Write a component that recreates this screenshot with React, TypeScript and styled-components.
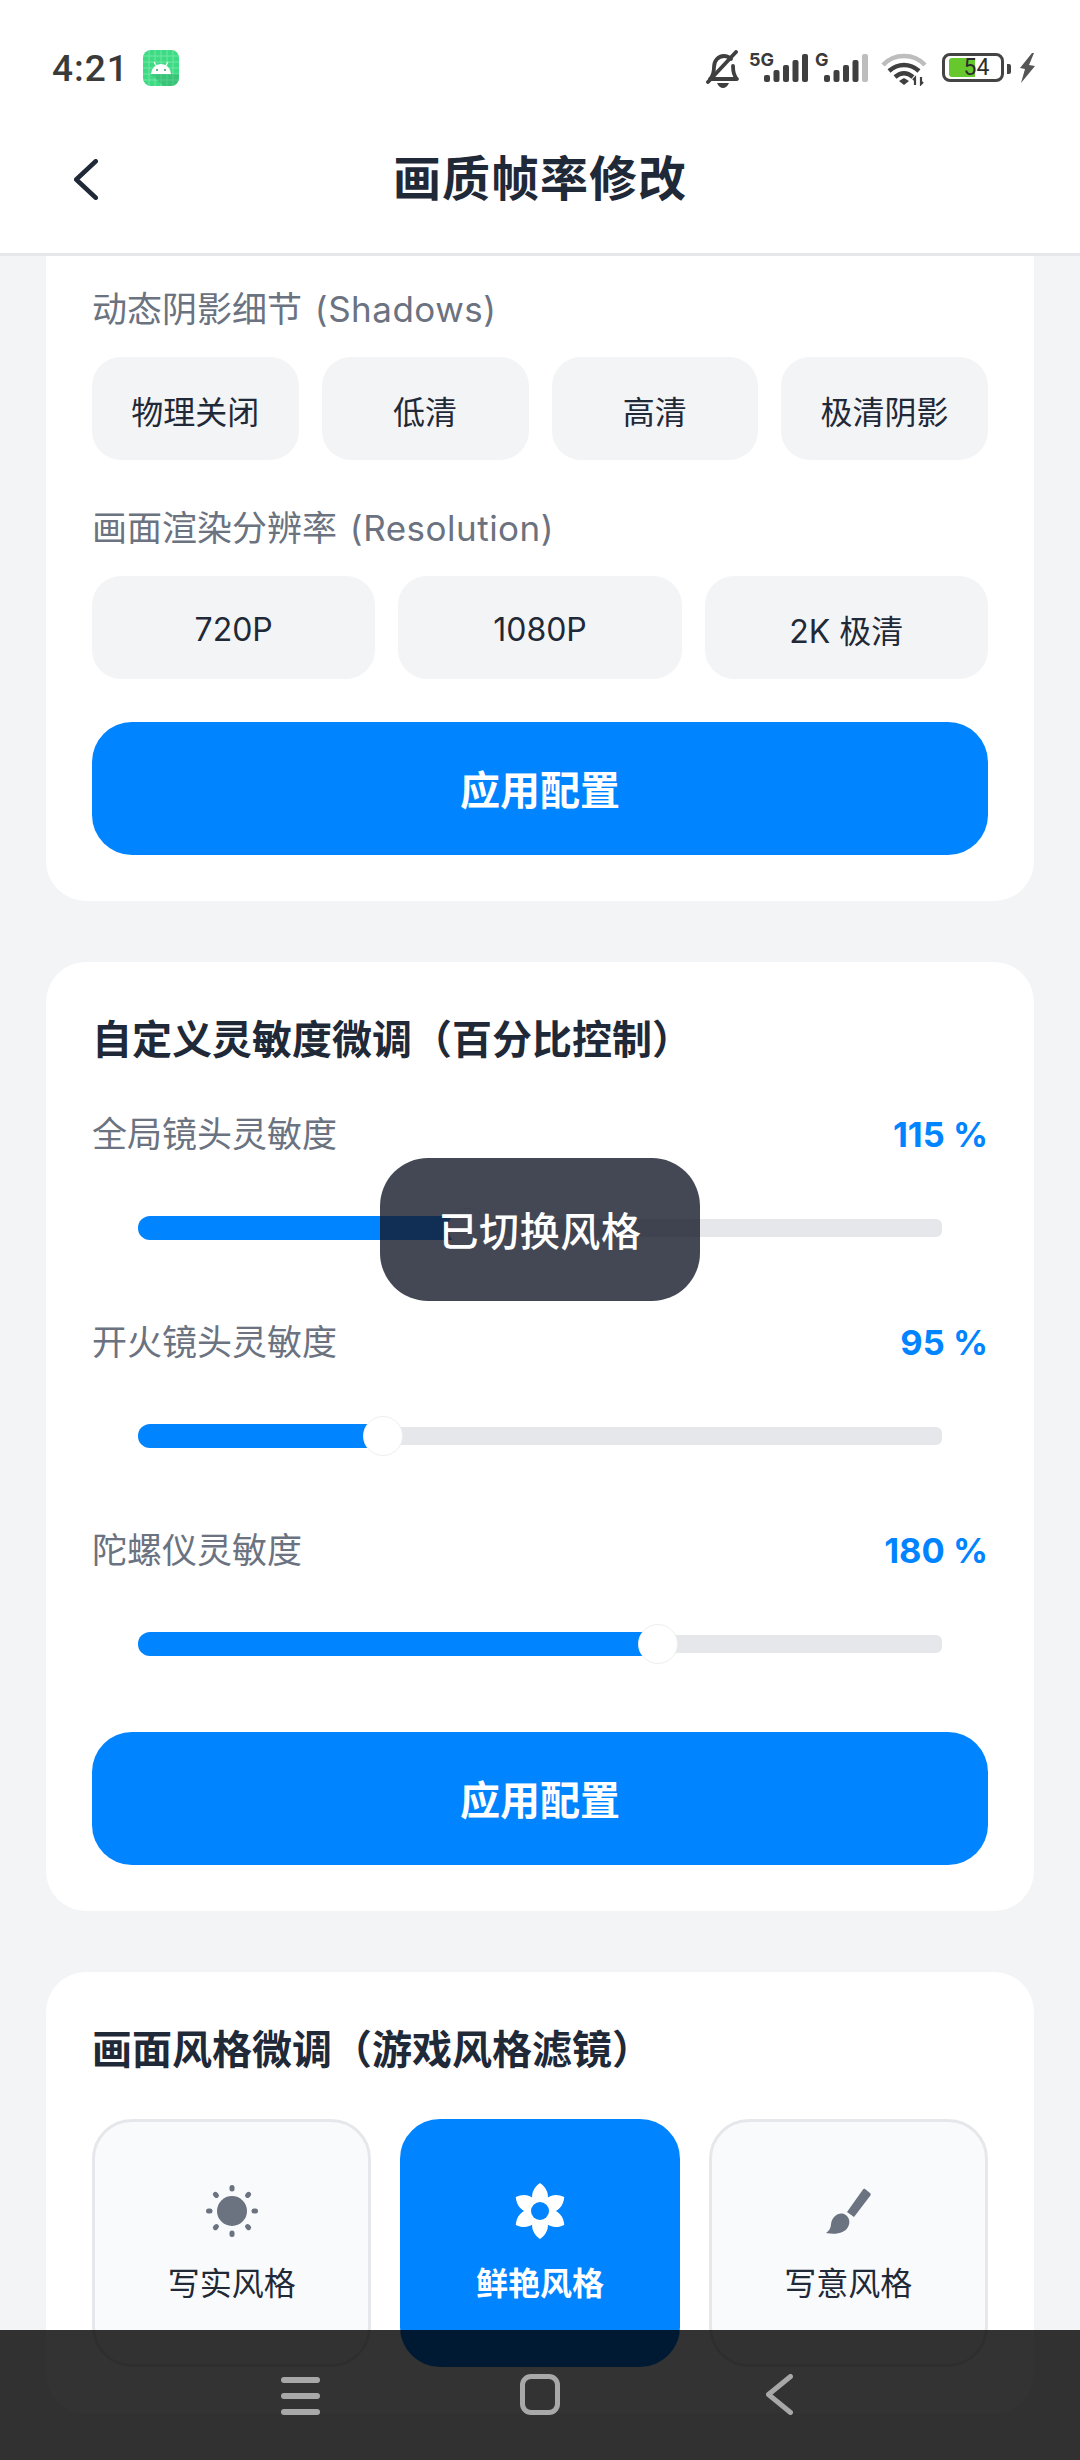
import React from "react";
import styled, { createGlobalStyle } from "styled-components";

const GlobalStyle = createGlobalStyle`
  html, body {
    margin: 0;
    padding: 0;
    background: #f3f4f6;
  }
  * {
    box-sizing: border-box;
  }
`;

const Page = styled.div`
  position: relative;
  width: 1080px;
  height: 2460px;
  overflow: hidden;
  background: #f3f4f6;
  font-family: "Inter", "Noto Sans CJK SC", sans-serif;
  color: #1f2937;
`;

const TopArea = styled.header`
  background: #fff;
  border-bottom: 3px solid #e5e7eb;
`;

const StatusBar = styled.div`
  height: 103px;
  padding: 50px 44px 0 52px;
  display: flex;
  justify-content: space-between;
  align-items: flex-start;
`;

const StatusLeft = styled.div`
  display: flex;
  align-items: center;
  gap: 14px;
  height: 36px;
`;

const Time = styled.span`
  font-family: "Roboto", sans-serif;
  font-size: 37px;
  font-weight: 500;
  letter-spacing: 1px;
  color: #3a3a3a;
`;

const StatusRight = styled.div`
  display: flex;
  align-items: flex-start;
`;

const NetworkBadge = styled.span`
  position: absolute;
  top: 2px;
  left: ${(p) => p.$left}px;
  font-size: 18px;
  line-height: 16px;
  font-weight: 700;
  color: #3a3a3a;
`;

const SignalBox = styled.div`
  position: relative;
  width: ${(p) => p.$width}px;
  height: 36px;
  margin-left: ${(p) => p.$gap}px;
`;

const SignalSlot = styled.div`
  position: absolute;
  left: ${(p) => p.$left}px;
  bottom: 4px;
  width: 45px;
  height: 28px;
`;

const Battery = styled.div`
  position: relative;
  width: 62px;
  height: 29px;
  margin: 3px 0 0 15px;
  border: 3px solid #444;
  border-radius: 8px;
  display: flex;
  align-items: center;
  justify-content: center;
  font-family: "Roboto", sans-serif;
  font-size: 23px;
  color: #2d2d2d;
`;

const BatteryFill = styled.div`
  position: absolute;
  left: 4px;
  top: 2px;
  bottom: 2px;
  width: 26px;
  background: #67c82e;
  border-radius: 3px 0 0 3px;
`;

const BatteryText = styled.span`
  position: relative;
  margin-left: 7px;
`;

const BatteryNub = styled.div`
  width: 4px;
  height: 10px;
  margin: 14px 0 0 3px;
  background: #444;
  border-radius: 0 2px 2px 0;
`;

const WifiSvg = styled.svg`
  margin: 2px 0 0 13px;
`;

const BoltSvg = styled.svg`
  margin: 3px 0 0 8px;
`;

const NavHeader = styled.div`
  height: 150px;
  padding: 2px 0 0 74px;
  display: grid;
  grid-template-columns: 1fr auto 1fr;
  align-items: center;
`;

const BackButton = styled.div`
  display: flex;
  align-items: center;
`;

const Title = styled.h1`
  margin: 0 0 0 -74px;
  font-size: 48px;
  line-height: 64px;
  font-weight: 700;
  color: #1f2937;
  letter-spacing: 1px;
`;

const Content = styled.main`
  padding: 0 46px;
  display: flex;
  flex-direction: column;
  gap: 61px;
`;

const Card = styled.section`
  background: #fff;
  border-radius: 40px;
  padding: 48px 46px 46px;
`;

const ScrolledCard = styled(Card)`
  border-radius: 0 0 40px 40px;
  padding-top: 28px;
`;

const CardTitle = styled.h2`
  margin: 0 0 41px;
  padding-top: 2px;
  font-size: 40px;
  line-height: 56px;
  font-weight: 700;
  color: #1f2937;
`;

const Label = styled.div`
  font-size: 35px;
  line-height: 50px;
  word-spacing: 3px;
  color: #6b7280;
`;

const LatinPart = styled.span`
  letter-spacing: 0.5px;
`;

const ChipRow = styled.div`
  display: grid;
  grid-template-columns: repeat(${(p) => p.$cols}, 1fr);
  gap: 23px;
  margin: 23px 0 43px;
`;

const Chip = styled.div`
  height: 103px;
  padding-top: 3px;
  border-radius: 29px;
  background: #f3f4f6;
  display: flex;
  align-items: center;
  justify-content: center;
  font-size: 32px;
  color: #1f2937;
`;

const ApplyButton = styled.div`
  height: 133px;
  padding-bottom: 1px;
  border-radius: 40px;
  background: #0084ff;
  display: flex;
  align-items: center;
  justify-content: center;
  font-size: 40px;
  font-weight: 700;
  color: #fff;
`;

const SliderList = styled.div`
  display: flex;
  flex-direction: column;
  gap: 66px;
  margin: 1px 0 65px;
`;

const LabelRow = styled.div`
  display: flex;
  justify-content: space-between;
  align-items: center;
`;

const SliderValue = styled.span`
  font-size: 34.5px;
  font-weight: 700;
  color: #0084ff;
`;

const SliderBox = styled.div`
  margin: 46px 46px 0;
  height: 46px;
  display: flex;
  align-items: center;
`;

const Track = styled.div`
  position: relative;
  width: 100%;
  height: 18px;
  border-radius: 6px;
  background: #e5e7eb;
`;

const TrackFill = styled.div`
  position: absolute;
  left: 0;
  top: -3px;
  height: 24px;
  border-radius: 12px 0 0 12px;
  background: #0084ff;
`;

const Thumb = styled.div`
  position: absolute;
  top: -11px;
  width: 40px;
  height: 40px;
  margin-left: -20px;
  border-radius: 50%;
  background: #fff;
  border: 1px solid #eceef0;
`;

const StyleGrid = styled.div`
  display: grid;
  grid-template-columns: repeat(3, 1fr);
  gap: 29px;
`;

const StyleTile = styled.div`
  height: 248px;
  padding-top: 1px;
  border-radius: 40px;
  border: 3px solid ${(p) => (p.$active ? "#0084ff" : "#e5e7eb")};
  background: ${(p) => (p.$active ? "#0084ff" : "#f9fafb")};
  color: ${(p) => (p.$active ? "#fff" : "#1f2937")};
  display: flex;
  flex-direction: column;
  align-items: center;
  justify-content: center;
  gap: 21px;
  font-size: 32px;
  line-height: 44px;
  font-weight: ${(p) => (p.$active ? 700 : 400)};

  svg {
    display: block;
    color: ${(p) => (p.$active ? "#fff" : "#6b7280")};
  }
`;

const Toast = styled.div`
  position: absolute;
  left: 380px;
  top: 1158px;
  width: 320px;
  height: 143px;
  padding-bottom: 2px;
  border-radius: 48px;
  background: rgba(21, 26, 41, 0.8);
  display: flex;
  align-items: center;
  justify-content: center;
  font-size: 40px;
  font-weight: 500;
  letter-spacing: 0.6px;
  color: #fff;
`;

const BottomBar = styled.nav`
  position: absolute;
  left: 0;
  right: 0;
  bottom: 0;
  height: 130px;
  padding: 44px 0 0 281px;
  background: rgba(0, 0, 0, 0.8);
  display: flex;
  align-items: flex-start;
  gap: 200px;
`;

const MenuIcon = styled.div`
  width: 39px;
  height: 38px;
  margin-top: 3px;
  display: flex;
  flex-direction: column;
  justify-content: space-between;

  i {
    display: block;
    height: 6px;
    border-radius: 3px;
    background: #a8a8a8;
  }
`;

const HomeIcon = styled.div`
  width: 40px;
  height: 41px;
  border: 5px solid #a8a8a8;
  border-radius: 11px;
`;

const BackChevron = styled.div`
  margin-left: 6px;
`;

const sliders = [
  { name: "全局镜头灵敏度", value: "115 %", pct: 41 },
  { name: "开火镜头灵敏度", value: "95 %", pct: 30.5 },
  { name: "陀螺仪灵敏度", value: "180 %", pct: 64.7 },
];

const BellOffIcon = () => (
  <svg width="34" height="38" viewBox="0 0 34 38" fill="none">
    <path d="M4 29c3-3 4-6 4-12 0-6 4-11 10-11 3 0 5 1 7 3M27 16c0 6 1 10 4 13H4" stroke="#3f3f3f" strokeWidth="3.8" strokeLinejoin="round" strokeLinecap="round" />
    <path d="M2 32L30 2" stroke="#3f3f3f" strokeWidth="3.8" strokeLinecap="round" />
    <path d="M11 33h12c-1 3-4 5-6 5s-5-2-6-5z" fill="#3f3f3f" />
  </svg>
);

const SignalBars = ({ lastDim }: { lastDim?: boolean }) => (
  <svg width="45" height="28" viewBox="0 0 45 28">
    <rect x="0" y="21" width="6" height="7" rx="2" fill="#3f3f3f" />
    <rect x="9.5" y="16" width="6" height="12" rx="2" fill="#3f3f3f" />
    <rect x="19" y="11" width="6" height="17" rx="2" fill="#3f3f3f" />
    <rect x="28.5" y="6" width="6" height="22" rx="2" fill="#3f3f3f" />
    <rect x="38" y="0" width="6" height="28" rx="2" fill={lastDim ? "#bdbdbd" : "#3f3f3f"} />
  </svg>
);

const WifiIcon = () => (
  <WifiSvg width="46" height="34" viewBox="0 0 46 34" fill="none">
    <path d="M2 13C13 1 33 1 44 13" stroke="#bdbdbd" strokeWidth="4.4" />
    <path d="M8 19c9-8 21-8 30 0" stroke="#3f3f3f" strokeWidth="4.4" />
    <path d="M14 25c6-5 12-5 18 0" stroke="#3f3f3f" strokeWidth="4.4" />
    <path d="M18 29l5-3 5 3-5 4z" fill="#3f3f3f" />
    <path d="M34 33v-7l-2 2M40 25v7l2-2" stroke="#3f3f3f" strokeWidth="2.2" />
  </WifiSvg>
);

const BoltIcon = () => (
  <BoltSvg width="17" height="30" viewBox="0 0 17 30">
    <path d="M13 0L1 15l5 1-4 14 14-17-6-1 5-12z" fill="#555" />
  </BoltSvg>
);

const AndroidAppIcon = () => (
  <svg width="36" height="36" viewBox="0 0 36 36">
    <rect width="36" height="36" rx="8" fill="#3ddc84" />
    <path d="M6 0v36M12 0v36M18 0v36M24 0v36M30 0v36M0 6h36M0 12h36M0 18h36M0 24h36M0 30h36" stroke="#7fe9ad" strokeWidth="0.8" />
    <path d="M8 24l12 12h8a8 8 0 0 0 8-8v-4z" fill="#2b9c5f" opacity="0.35" />
    <path d="M8 24a10 10 0 0 1 20 0z" fill="#fff" />
    <path d="M11 12l2.500 4M25 12l-2.500 4" stroke="#fff" strokeWidth="1.2" />
    <circle cx="14" cy="20" r="1" fill="#2b9c5f" />
    <circle cx="22" cy="20" r="1" fill="#2b9c5f" />
  </svg>
);

const Chevron = ({ color, width, height, stroke }: { color: string; width: number; height: number; stroke: number }) => (
  <svg width={width} height={height} viewBox={`0 0 ${width} ${height}`} fill="none">
    <path
      d={`M${width - stroke / 2} ${stroke / 2}L${stroke / 2} ${height / 2}L${width - stroke / 2} ${height - stroke / 2}`}
      stroke={color}
      strokeWidth={stroke}
      strokeLinecap="round"
      strokeLinejoin="round"
    />
  </svg>
);

const SunIcon = () => (
  <svg width="60" height="60" viewBox="0 0 60 60" fill="currentColor" stroke="none">
    <circle cx="30" cy="30" r="15" />
    {[0, 45, 90, 135, 180, 225, 270, 315].map((a) => (
      <rect key={a} x="27.500" y="4" width="5" height="6.500" rx="2.500" transform={`rotate(${a} 30 30)`} />
    ))}
  </svg>
);

const FlowerIcon = () => (
  <svg width="60" height="60" viewBox="0 0 60 60" fill="currentColor">
    {[0, 60, 120, 180, 240, 300].map((a) => (
      <path key={a} d="M30 30C18 20 21 8 30 2c9 6 12 18 0 28z" transform={`rotate(${a} 30 30)`} />
    ))}
    <circle cx="30" cy="30" r="15" />
    <circle cx="30" cy="30" r="9" fill="#0084ff" />
  </svg>
);

const BrushIcon = () => (
  <svg width="60" height="60" viewBox="0 0 60 60" fill="currentColor">
    <path d="M47 8l5 4c.8.7.9 1.600.4 2.400L36 36l-7-5L45 8.500c.5-.8 1.300-1 2-.5z" />
    <path d="M26 33c5 2 7 8 4 13-3 6-12 8-22 6 3-2 5-5 5-9 1-7 7-12 13-10z" />
  </svg>
);

export default function App() {
  return (
    <Page>
      <GlobalStyle />
      <TopArea>
        <StatusBar>
          <StatusLeft>
            <Time>4:21</Time>
            <AndroidAppIcon />
          </StatusLeft>
          <StatusRight>
            <BellOffIcon />
            <SignalBox $width={59} $gap={9}>
              <NetworkBadge $left={0}>5G</NetworkBadge>
              <SignalSlot $left={15}>
                <SignalBars />
              </SignalSlot>
            </SignalBox>
            <SignalBox $width={53} $gap={7}>
              <NetworkBadge $left={0}>G</NetworkBadge>
              <SignalSlot $left={9}>
                <SignalBars lastDim />
              </SignalSlot>
            </SignalBox>
            <WifiIcon />
            <Battery>
              <BatteryFill />
              <BatteryText>54</BatteryText>
            </Battery>
            <BatteryNub />
            <BoltIcon />
          </StatusRight>
        </StatusBar>
        <NavHeader>
          <BackButton>
            <Chevron color="#1f2937" width={24} height={41} stroke={4.5} />
          </BackButton>
          <Title>画质帧率修改</Title>
          <div />
        </NavHeader>
      </TopArea>

      <Content>
        <ScrolledCard>
          <Label>
            动态阴影细节 <LatinPart>(Shadows)</LatinPart>
          </Label>
          <ChipRow $cols={4}>
            <Chip>物理关闭</Chip>
            <Chip>低清</Chip>
            <Chip>高清</Chip>
            <Chip>极清阴影</Chip>
          </ChipRow>
          <Label>
            画面渲染分辨率 <LatinPart>(Resolution)</LatinPart>
          </Label>
          <ChipRow $cols={3}>
            <Chip>720P</Chip>
            <Chip>1080P</Chip>
            <Chip>2K 极清</Chip>
          </ChipRow>
          <ApplyButton>应用配置</ApplyButton>
        </ScrolledCard>

        <Card>
          <CardTitle>自定义灵敏度微调（百分比控制）</CardTitle>
          <SliderList>
            {sliders.map((s) => (
              <div key={s.name}>
                <LabelRow>
                  <Label>{s.name}</Label>
                  <SliderValue>{s.value}</SliderValue>
                </LabelRow>
                <SliderBox>
                  <Track>
                    <TrackFill style={{ width: `${s.pct}%` }} />
                    <Thumb style={{ left: `${s.pct}%` }} />
                  </Track>
                </SliderBox>
              </div>
            ))}
          </SliderList>
          <ApplyButton>应用配置</ApplyButton>
        </Card>

        <Card>
          <CardTitle>画面风格微调（游戏风格滤镜）</CardTitle>
          <StyleGrid>
            <StyleTile>
              <SunIcon />
              写实风格
            </StyleTile>
            <StyleTile $active>
              <FlowerIcon />
              鲜艳风格
            </StyleTile>
            <StyleTile>
              <BrushIcon />
              写意风格
            </StyleTile>
          </StyleGrid>
        </Card>
      </Content>

      <Toast>已切换风格</Toast>

      <BottomBar>
        <MenuIcon>
          <i />
          <i />
          <i />
        </MenuIcon>
        <HomeIcon />
        <BackChevron>
          <Chevron color="#a8a8a8" width={27} height={41} stroke={5} />
        </BackChevron>
      </BottomBar>
    </Page>
  );
}
